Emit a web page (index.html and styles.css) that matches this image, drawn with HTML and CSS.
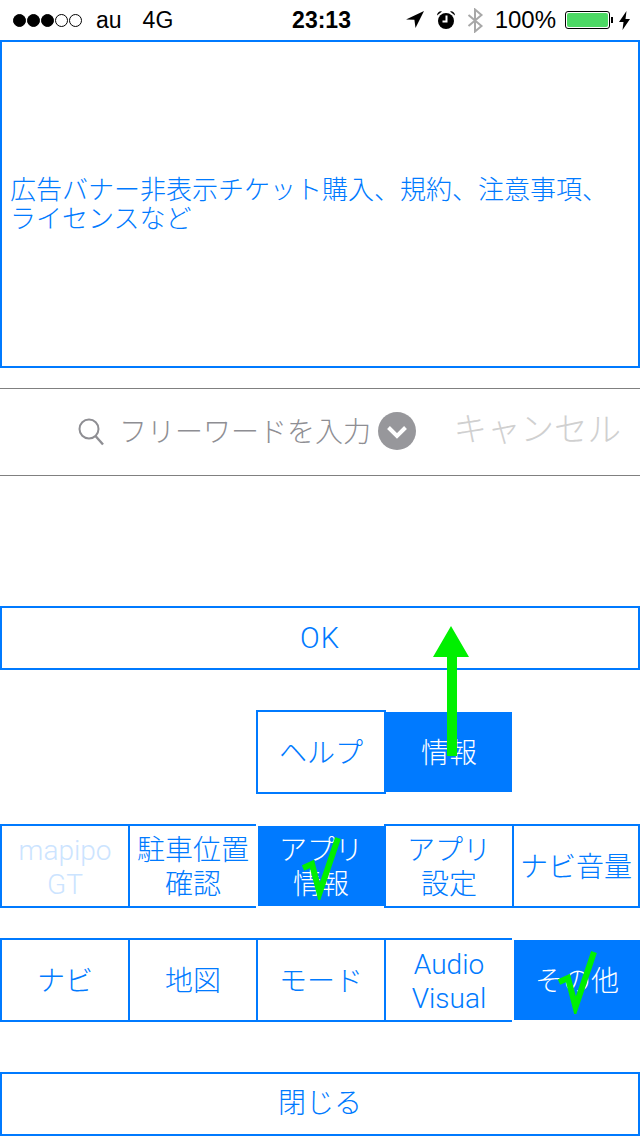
FILE: index.html
```html
<!DOCTYPE html>
<html lang="ja">
<head>
    <meta charset="UTF-8">
    <meta name="viewport" content="width=device-width, initial-scale=1.0">
    <title>情報</title>
    <link rel="stylesheet" href="styles.css">
</head>
<body>
    <div class="statusbar">
        <div class="status-left">
            <span class="dots">
                <i class="dot on"></i><i class="dot on"></i><i class="dot on"></i><i class="dot"></i><i class="dot"></i>
            </span>
            <span class="carrier">au</span>
            <span class="network">4G</span>
        </div>
        <div class="clock">23:13</div>
        <div class="status-right">
            <svg class="ic-location" width="18" height="18" viewBox="0 0 18 18"><path d="M18 0 L0 8.5 L8.4 8.7 L9.5 17 Z" fill="#000"/></svg>
            <svg class="ic-alarm" width="20" height="20" viewBox="0 0 20 20">
                <path d="M1 5.5 A4 4 0 0 1 6 1.5 Z M19 5.5 A4 4 0 0 0 14 1.5 Z" fill="#000"/>
                <circle cx="10" cy="11" r="8" fill="#000"/>
                <path d="M10.5 5.5 V11.5 H6.5" fill="none" stroke="#fff" stroke-width="2"/>
            </svg>
            <svg class="ic-bluetooth" width="17" height="25" viewBox="0 0 17 25"><path d="M1.5 7 L14.5 18 L8 23.5 V1.5 L14.5 7 L1.5 18" fill="none" stroke="#a8a8a8" stroke-width="2"/></svg>
            <span class="battery-text">100%</span>
            <span class="battery"><span class="battery-fill"></span></span>
            <span class="battery-nub"></span>
            <svg class="ic-bolt" width="11" height="19" viewBox="0 0 11 19"><path d="M7.5 0 L0 11 H4.5 L3.5 19 L11 8 H6.5 Z" fill="#000"/></svg>
        </div>
    </div>

    <div class="banner">広告バナー非表示チケット購入、規約、注意事項、ライセンスなど</div>

    <div class="search">
        <svg class="ic-search" width="26" height="28" viewBox="0 0 26 28">
            <circle cx="11" cy="11" r="9.5" fill="none" stroke="#8e8e93" stroke-width="2"/>
            <path d="M17.5 18 L25 26.5" fill="none" stroke="#8e8e93" stroke-width="2.4"/>
        </svg>
        <span class="placeholder">フリーワードを入力</span>
        <svg class="ic-chevron" width="38" height="38" viewBox="0 0 38 38">
            <circle cx="19" cy="19" r="19" fill="#97979b"/>
            <path d="M10.5 15.5 L19 24 L27.5 15.5" fill="none" stroke="#fff" stroke-width="4"/>
        </svg>
        <span class="cancel">キャンセル</span>
    </div>

    <button class="wide ok">OK</button>

    <div class="tabs tabs-top">
        <button class="cell help">ヘルプ</button>
        <button class="cell selected">情報
            <svg class="arrow" width="36" height="131" viewBox="0 0 36 131"><path d="M18 0 L36 31 H24 V130 H14 V31 H0 Z" fill="#00f000"/></svg>
        </button>
    </div>

    <div class="tabs tabs-mid">
        <button class="cell disabled">mapipo<br>GT</button>
        <button class="cell">駐車位置<br>確認</button>
        <button class="cell selected">アプリ<br>情報
            <svg class="check" width="40" height="64" viewBox="0 0 40 64"><path d="M1 32 L10 28 L17.5 57 L36 2" fill="none" stroke="#00f000" stroke-width="6"/></svg>
        </button>
        <button class="cell">アプリ<br>設定</button>
        <button class="cell last">ナビ音量</button>
    </div>

    <div class="tabs tabs-bottom">
        <button class="cell">ナビ</button>
        <button class="cell">地図</button>
        <button class="cell">モード</button>
        <button class="cell">Audio<br>Visual</button>
        <button class="cell selected">その他
            <svg class="check" width="40" height="64" viewBox="0 0 40 64"><path d="M1 32 L10 28 L17.5 57 L36 2" fill="none" stroke="#00f000" stroke-width="6"/></svg>
        </button>
    </div>

    <button class="wide close">閉じる</button>
</body>
</html>
```

FILE: styles.css
```css
html, body {
    margin: 0;
    padding: 0;
    height: 1136px;
    overflow: hidden;
    background-color: white;
}

body {
    font-family: Roboto, "Noto Sans CJK JP", sans-serif;
    font-weight: 300;
    color: #007aff;
}

.statusbar {
    display: flex;
    align-items: center;
    height: 40px;
    font-family: "Liberation Sans", sans-serif;
    font-weight: normal;
    font-size: 24px;
    color: black;
}

.status-left {
    flex: 1;
    display: flex;
    align-items: center;
    padding-left: 13px;
    font-size: 23px;
}

.dots {
    display: flex;
    gap: 1px;
}

.dot {
    box-sizing: border-box;
    width: 13px;
    height: 13px;
    border: 1px solid black;
    border-radius: 50%;
}

.dot.on {
    background-color: black;
}

.carrier {
    margin-left: 14px;
}

.network {
    margin-left: 21px;
}

.clock {
    font-size: 23px;
    font-weight: bold;
}

.status-right {
    flex: 1;
    display: flex;
    align-items: center;
    justify-content: flex-end;
    padding-right: 10px;
}

.ic-alarm {
    margin-left: 12px;
}

.ic-bluetooth {
    margin-left: 11px;
}

.battery-text {
    margin-left: 11px;
}

.battery {
    box-sizing: border-box;
    display: block;
    width: 45px;
    height: 18px;
    margin-left: 9px;
    padding: 1px;
    border: 1px solid black;
    border-radius: 3px;
}

.battery-fill {
    display: block;
    height: 100%;
    background-color: #4cd964;
    border-radius: 2px;
}

.battery-nub {
    width: 2px;
    height: 6px;
    margin-left: 1px;
    background-color: black;
}

.ic-bolt {
    margin-left: 6px;
}

.banner {
    box-sizing: border-box;
    display: flex;
    align-items: center;
    height: 328px;
    padding: 2px 8px 0;
    border: 2px solid #007aff;
    font-size: 26px;
    line-height: 29px;
}

.search {
    box-sizing: border-box;
    display: flex;
    align-items: center;
    height: 88px;
    margin-top: 20px;
    padding: 0 19px 0 78px;
    border-top: 1px solid #808080;
    border-bottom: 1px solid #808080;
}

.placeholder {
    margin-left: 15px;
    margin-bottom: 4px;
    font-size: 28px;
    color: #8e8e93;
}

.ic-chevron {
    margin-left: 7px;
    margin-bottom: 2px;
}

.cancel {
    margin-left: auto;
    margin-bottom: 12px;
    font-size: 33.5px;
    color: #d0d0d0;
}

button {
    box-sizing: border-box;
    padding: 0;
    font-family: inherit;
    font-weight: inherit;
    font-size: 28px;
    line-height: 34px;
    color: #007aff;
    background-color: white;
    border: none;
}

.wide {
    display: block;
    width: 640px;
    height: 64px;
    border: 2px solid #007aff;
}

.ok {
    margin-top: 130px;
    font-size: 29px;
    letter-spacing: 1px;
}

.close {
    margin-top: 50px;
}

.tabs {
    display: grid;
    grid-template-columns: repeat(5, 128px);
    height: 84px;
}

.tabs-top {
    margin-top: 40px;
}

.tabs-mid {
    margin-top: 30px;
}

.tabs-bottom {
    margin-top: 30px;
}

.cell {
    position: relative;
    padding-top: 4px;
    border-top: 2px solid #007aff;
    border-bottom: 2px solid #007aff;
    border-left: 2px solid #007aff;
    white-space: nowrap;
}

.cell.last {
    border-right: 2px solid #007aff;
}

.cell.disabled {
    color: #cce4ff;
}

.cell.selected {
    color: white;
    background-color: #007aff;
    background-clip: padding-box;
    border-color: transparent;
}

.help {
    grid-column: 3;
    width: 130px;
    border-right: 2px solid #007aff;
}

.arrow {
    position: absolute;
    left: 47px;
    top: -86px;
}

.check {
    position: absolute;
    left: 44px;
    top: 10px;
}
```
